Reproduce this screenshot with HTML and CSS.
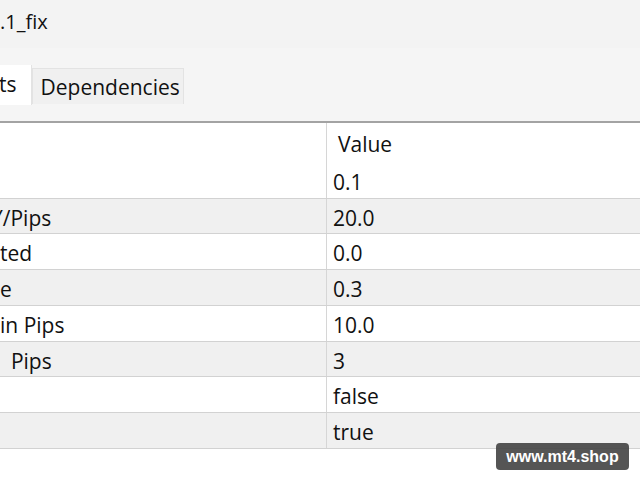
FILE: index.html
```html
<!DOCTYPE html>
<html lang="en">
<head>
  <meta charset="UTF-8">
  <title>Expert properties</title>
  <link rel="stylesheet" href="styles.css">
</head>
<body>
  <!-- Window title -->
  <div class="titlebar">.1_fix</div>

  <!-- Tabs -->
  <div class="tabbar">
    <div class="tabs">
      <div class="tab active">ts</div>
      <div class="tab">Dependencies</div>
    </div>
  </div>

  <!-- Inputs table -->
  <div class="inputs">
    <div class="row head">
      <div class="name"></div>
      <div class="value">Value</div>
    </div>
    <div class="row">
      <div class="name"></div>
      <div class="value">0.1</div>
    </div>
    <div class="row alt">
      <div class="name"><span class="cut">Y/Pips</span></div>
      <div class="value">20.0</div>
    </div>
    <div class="row">
      <div class="name">ted</div>
      <div class="value">0.0</div>
    </div>
    <div class="row alt">
      <div class="name">e</div>
      <div class="value">0.3</div>
    </div>
    <div class="row">
      <div class="name">in Pips</div>
      <div class="value">10.0</div>
    </div>
    <div class="row alt">
      <div class="name">&nbsp; Pips</div>
      <div class="value">3</div>
    </div>
    <div class="row">
      <div class="name"></div>
      <div class="value">false</div>
    </div>
    <div class="row alt">
      <div class="name"></div>
      <div class="value">true</div>
    </div>
  </div>

  <div class="watermark">www.mt4.shop</div>
</body>
</html>
```

FILE: styles.css
```css
body {
  margin: 0;
  padding: 0;
  width: 640px;
  height: 480px;
  overflow: hidden;
  background-color: #ffffff;
  font-family: "Open Sans", "Noto Sans", sans-serif;
  color: #111111;
  position: relative;
}

.titlebar {
  height: 48px;
  background-color: #f3f3f3;
  font-size: 20px;
  line-height: 44px;
}

.tabbar {
  height: 56px;
  padding-top: 17px;
  background-color: #f5f5f5;
  border-bottom: 2px solid #a3a3a3;
}

.tabs {
  display: flex;
  align-items: flex-start;
}

.tab {
  font-size: 21px;
  height: 36px;
  line-height: 36px;
  margin-top: 3px;
  padding: 0 3px 0 8px;
  background-color: #f0f0f0;
  border: 1px solid #e3e3e3;
  border-bottom: none;
  box-sizing: border-box;
}

.tab.active {
  background-color: #ffffff;
  height: 40px;
  line-height: 38px;
  margin-top: 0;
  margin-left: -1px;
  padding: 0 14px 0 0;
  border: none;
  border-right: 1px solid #e3e3e3;
}

.inputs {
  font-size: 21px;
}

.row {
  display: flex;
  height: 35.72px;
  box-sizing: border-box;
  border-bottom: 1px solid #d2d2d2;
}

.row.head {
  height: 40px;
  border-bottom: none;
}

.row.alt {
  background-color: #f0f0f0;
}

.name {
  width: 326px;
  border-right: 1px solid #d6d6d6;
  overflow: hidden;
  white-space: nowrap;
  line-height: 34px;
  padding-top: 2px;
}

.value {
  flex: 1;
  padding-left: 6px;
  padding-top: 2px;
  line-height: 34px;
}

.head .value {
  padding-left: 11px;
  padding-top: 0;
  line-height: 43px;
}

.cut {
  margin-left: -9px;
}

.watermark {
  position: absolute;
  left: 496px;
  top: 443px;
  width: 133px;
  height: 27px;
  background-color: rgba(66, 66, 66, 0.9);
  border-radius: 4px;
  color: #ffffff;
  font-family: "Liberation Sans", Arial, sans-serif;
  font-weight: bold;
  font-size: 16px;
  line-height: 27px;
  text-align: center;
}
```
